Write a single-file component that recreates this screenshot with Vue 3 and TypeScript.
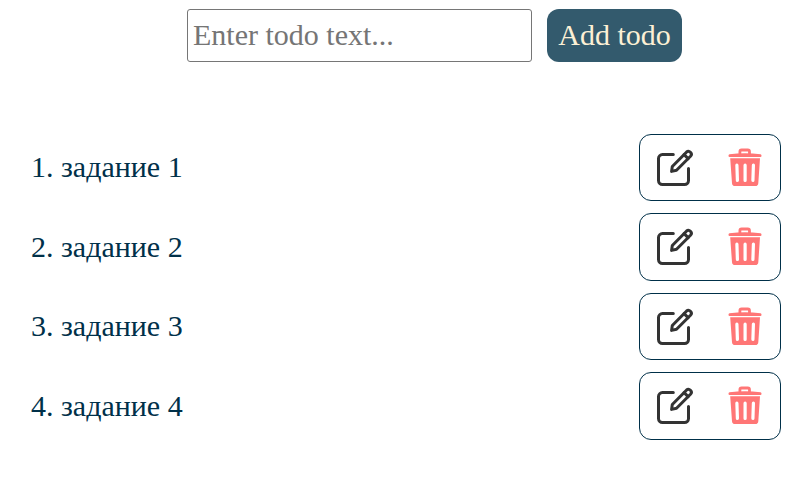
<script setup lang="ts">
import { ref } from 'vue'

interface Todo {
  id: number
  text: string
}

const draft = ref<string>('')
const todos = ref<Todo[]>([
  { id: 1, text: 'задание 1' },
  { id: 2, text: 'задание 2' },
  { id: 3, text: 'задание 3' },
  { id: 4, text: 'задание 4' },
])

function addTodo(): void {
  const text = draft.value.trim()
  if (!text) return
  const id = Math.max(0, ...todos.value.map((t) => t.id)) + 1
  todos.value.push({ id, text })
  draft.value = ''
}

function removeTodo(id: number): void {
  todos.value = todos.value.filter((t) => t.id !== id)
}

function editTodo(todo: Todo): void {
  draft.value = todo.text
  removeTodo(todo.id)
}
</script>

<template>
  <main class="page">
    <form class="form" @submit.prevent="addTodo">
      <input v-model="draft" class="field" type="text" placeholder="Enter todo text..." />
      <button class="add" type="submit">Add todo</button>
    </form>
    <div class="list">
      <div v-for="(todo, i) in todos" :key="todo.id" class="row">
        <span class="text">{{ i + 1 }}. {{ todo.text }}</span>
        <div class="actions">
          <button class="icon" type="button" aria-label="Edit" @click="editTodo(todo)">
            <svg class="edit" width="40" height="40" viewBox="0 0 40 40">
              <path d="M18.3 6.6H7.5a4 4 0 0 0-4 4v21.9a4 4 0 0 0 4 4h22a4 4 0 0 0 4-4V20.5" />
              <path d="M16.6 23.4l.7-4.9L31.4 4.2a2.9 2.9 0 0 1 4.1 4.1L21.5 22.3z" />
              <path d="M29.1 6.6l4 4" />
            </svg>
          </button>
          <button class="icon" type="button" aria-label="Delete" @click="removeTodo(todo.id)">
            <svg class="trash" width="36" height="40" viewBox="0 0 36 40">
              <path class="handle" d="M12.9 6.2V3.7q0-1.7 1.7-1.7h6.2q1.7 0 1.7 1.7v2.5" />
              <path d="M2.5 6.3Q18 4.3 33.5 6.3q1 .2 1 1.4t-1 1.4H2.5q-1-.2-1-1.4t1-1.4z" />
              <path d="M3.2 10.3h29.8L31.3 35.2q-.2 2.8-3 2.8H8q-2.8 0-3-2.8z" />
              <path class="slots" d="M9.9 17.2l.5 15.2M18.1 17.2v15.2M26.4 17.2l-.5 15.2" />
            </svg>
          </button>
        </div>
      </div>
    </div>
  </main>
</template>

<style scoped>
.page {
  box-sizing: border-box;
  padding: 9px 25px 0 31px;
  font-family: 'Liberation Serif', 'Times New Roman', serif;
  font-size: 30px;
  color: #003049;
}

.form {
  display: flex;
  gap: 15px;
  margin-left: 156px;
}

.field {
  box-sizing: border-box;
  width: 345px;
  height: 53px;
  padding: 0 5px 2px;
  border: 1px solid #767676;
  border-radius: 3px;
  background: #fff;
  font: inherit;
  color: inherit;
}

.field::placeholder {
  color: #757575;
}

.add {
  width: 135px;
  height: 53px;
  padding: 0 0 2px;
  border: 0;
  border-radius: 12px;
  background: #335a6d;
  font: inherit;
  color: #fdf0d5;
}

.list {
  display: flex;
  flex-direction: column;
  gap: 12px;
  margin-top: 71.6px;
}

.row {
  display: flex;
  align-items: center;
  justify-content: space-between;
  height: 67.5px;
}

.actions {
  box-sizing: border-box;
  display: flex;
  justify-content: space-between;
  align-items: center;
  width: 142px;
  height: 100%;
  padding: 1px 17px 0 15px;
  border: 1px solid #003049;
  border-radius: 12px;
}

.icon {
  display: flex;
  padding: 0;
  border: 0;
  background: none;
}

.edit {
  fill: none;
  stroke: #333;
  stroke-width: 3;
  stroke-linecap: round;
  stroke-linejoin: round;
}

.trash {
  fill: #ff7676;
}

.handle {
  fill: none;
  stroke: #ff7676;
  stroke-width: 2.8;
}

.slots {
  fill: none;
  stroke: #fff;
  stroke-width: 3.2;
  stroke-linecap: round;
}
</style>

<style>
body {
  background: #fff;
}
</style>
